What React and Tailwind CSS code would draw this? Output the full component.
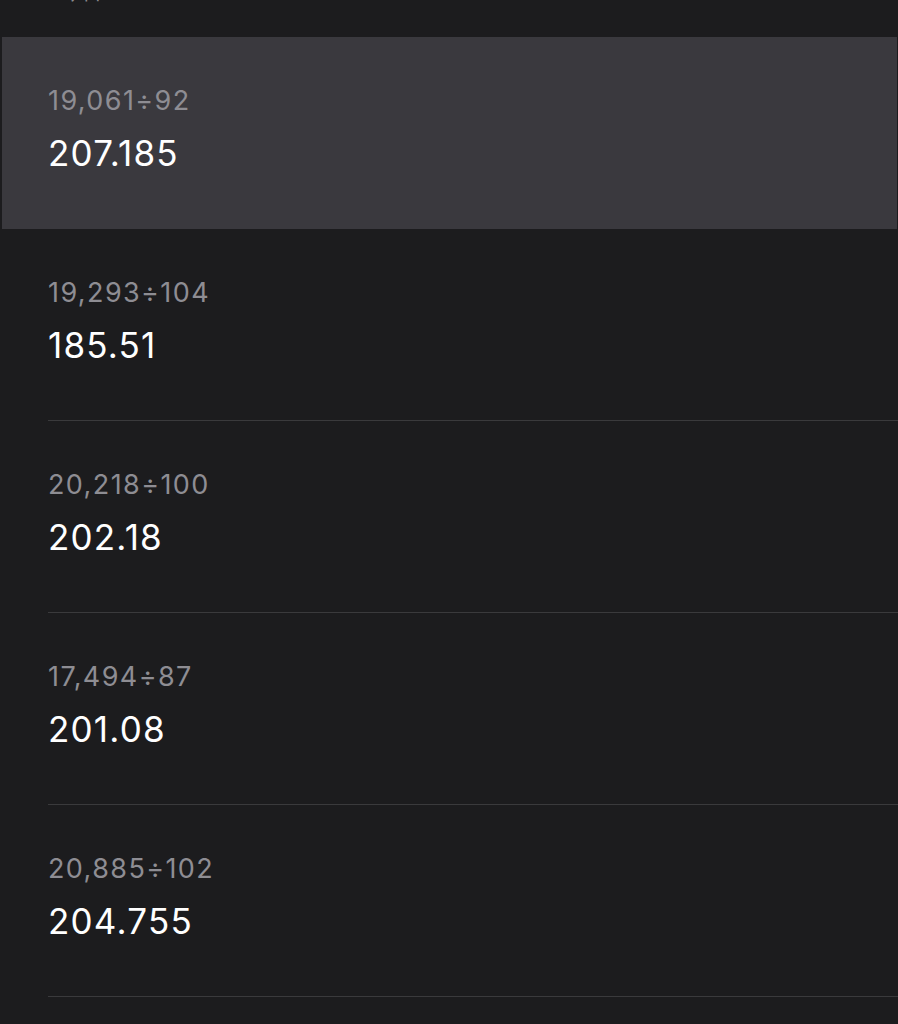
export default function App() {
  const rows = [
    { e: "19,061÷92", r: "207.185", hl: true },
    { e: "19,293÷104", r: "185.51" },
    { e: "20,218÷100", r: "202.18" },
    { e: "17,494÷87", r: "201.08" },
    { e: "20,885÷102", r: "204.755" },
  ];
  return (
    <div className="w-[898px] h-[1024px] overflow-hidden bg-[#1c1c1e]" style={{ fontFamily: "Inter, 'Noto Sans CJK SC', sans-serif" }}>
      <div className="h-[37px] overflow-hidden relative">
        <div className="absolute left-[62px] top-[-17px] text-[20px] leading-[20px] text-[#8d8c92]">今日</div>
      </div>
      {rows.map((row, i) => (
        <div key={i} className={row.hl ? "h-[192px] ml-[2px] mr-[1px] bg-[#3a393e]" : "h-[192px]"}>
          <div className={row.hl ? "ml-[46px] h-full" : "ml-[48px] h-full border-b border-[#3a3a3c]"}>
            <div className="pt-[50px] text-[27px] leading-[27px] text-[#8e8d93] tracking-[1.4px]">{row.e}</div>
            <div className="mt-[22px] text-[35px] leading-[35px] text-white tracking-[1.2px]">{row.r}</div>
          </div>
        </div>
      ))}
    </div>
  );
}
